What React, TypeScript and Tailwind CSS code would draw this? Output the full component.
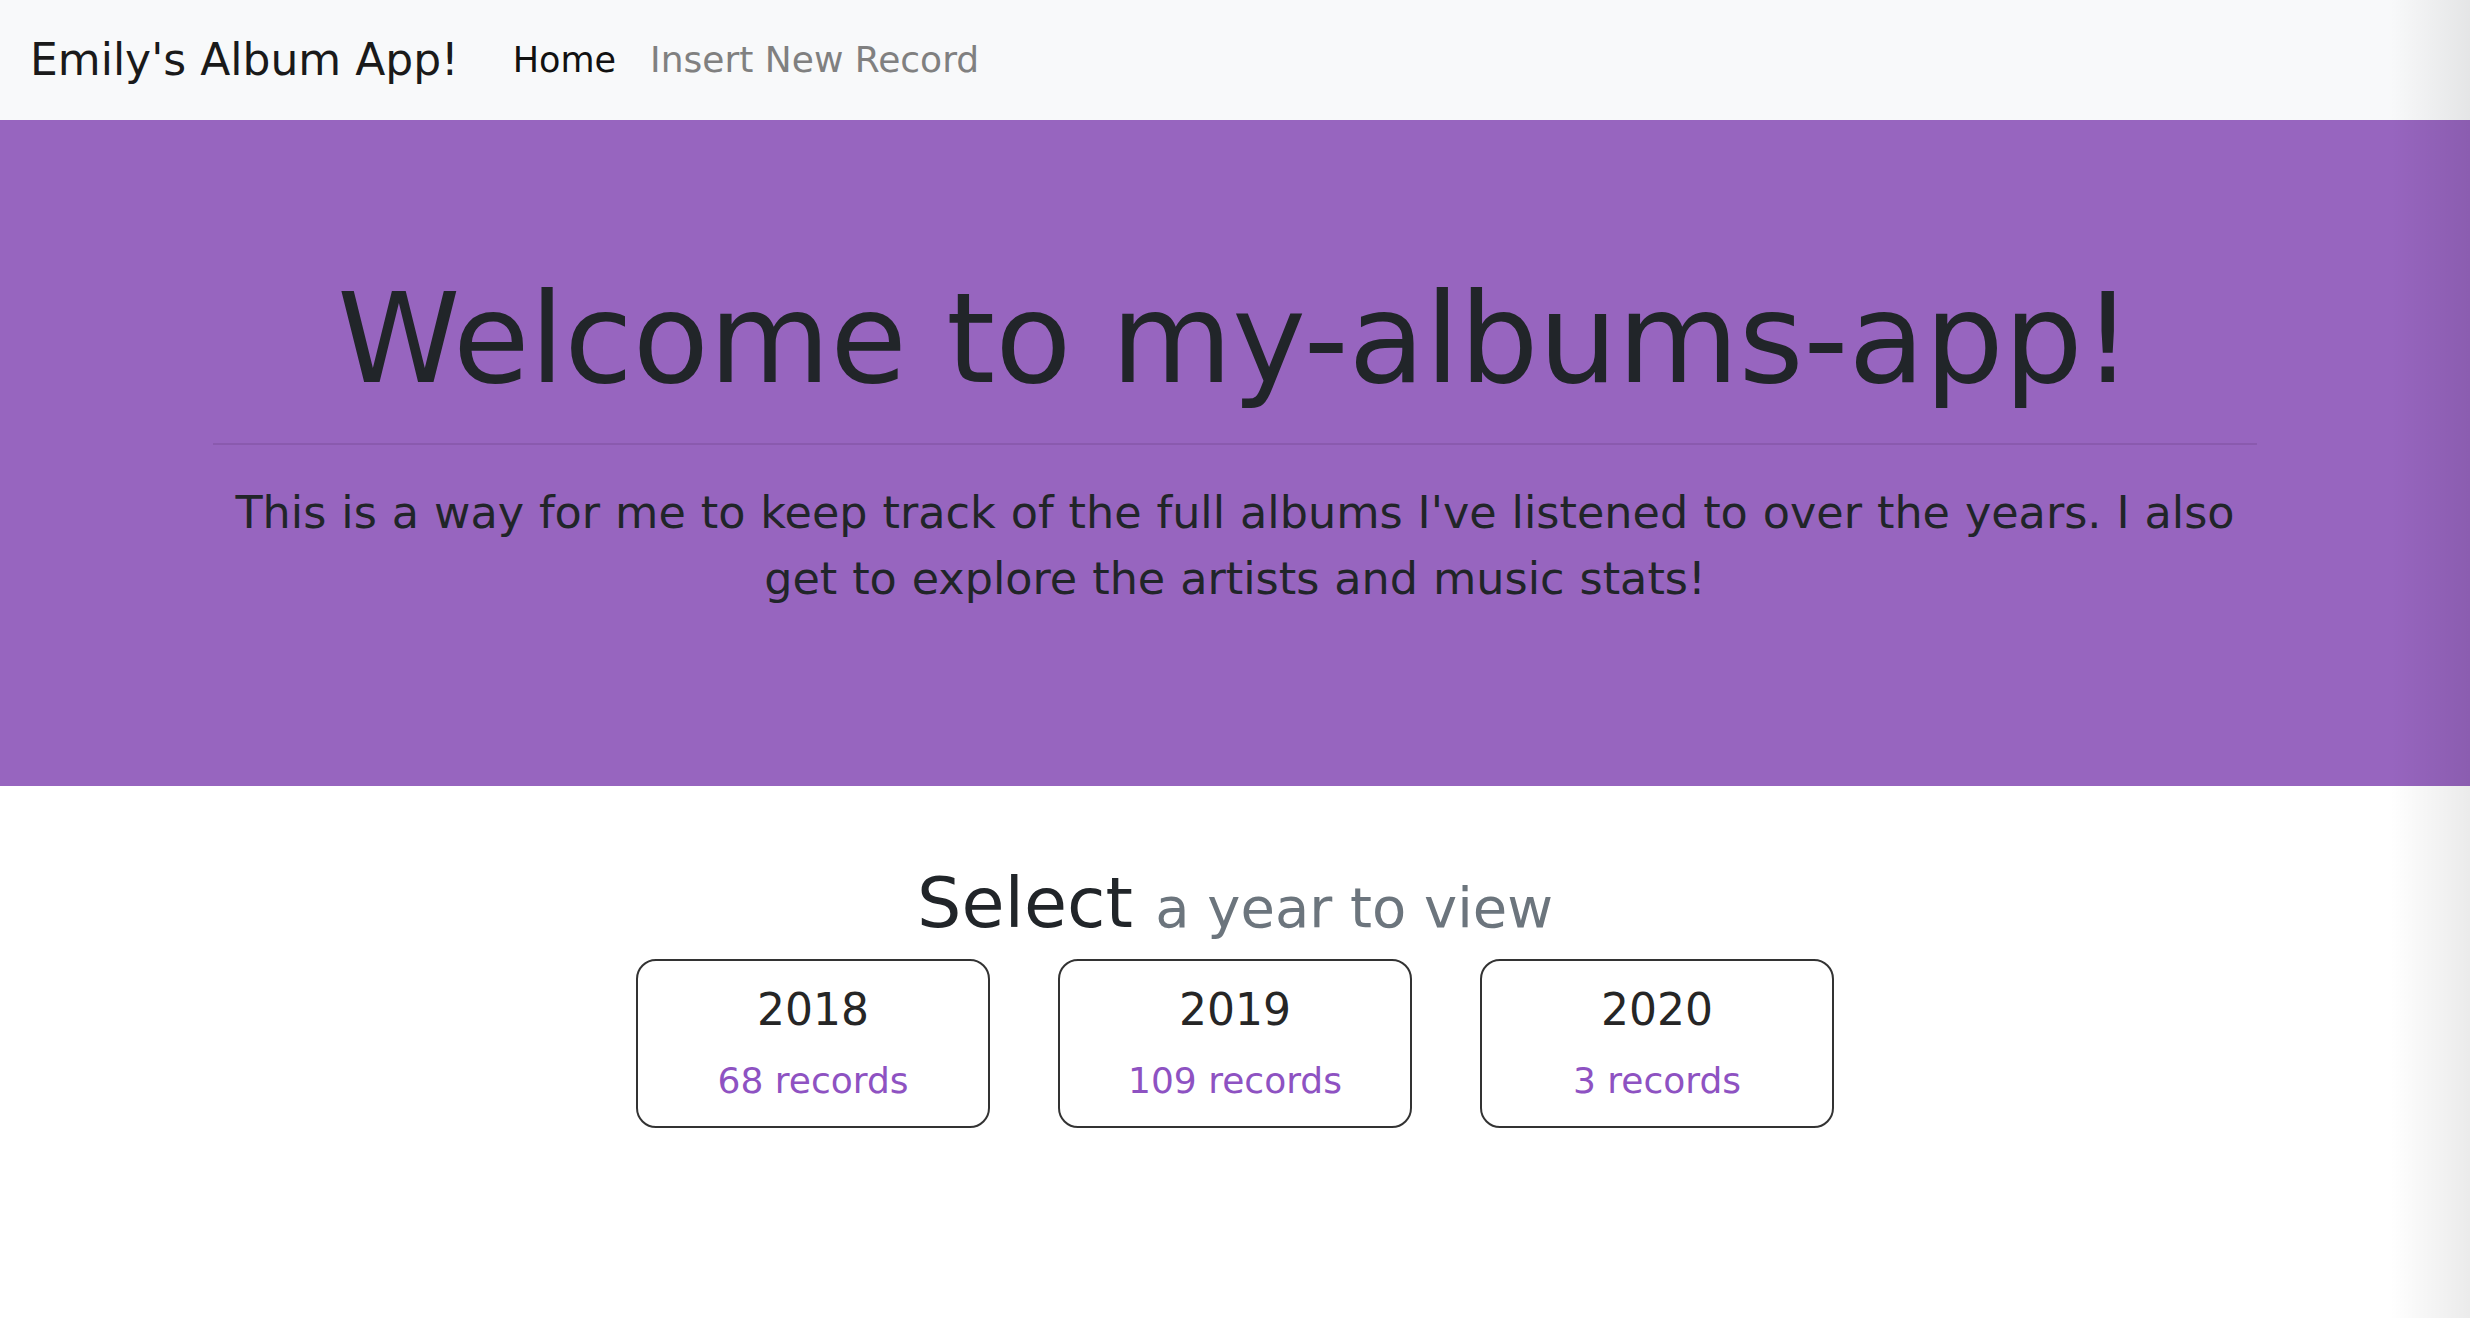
import React from "react";

type Year = {
  year: string;
  count: number;
};

const years: Year[] = [
  { year: "2018", count: 68 },
  { year: "2019", count: 109 },
  { year: "2020", count: 3 },
];

const YearCard = ({ year, count }: Year) => {
  return (
    <div className="w-[354px] h-[169px] border-2 border-[#333333] rounded-[20px] bg-white flex flex-col items-center pt-[16px]">
      <div className="text-[44px] leading-[66px] text-[#262626]">{year}</div>
      <div className="mt-[11px] text-[36px] leading-[54px] text-[#8e52c2]">
        {count} records
      </div>
    </div>
  );
};

const App = () => {
  return (
    <div
      className="relative min-h-screen bg-white overflow-hidden"
      style={{ fontFamily: '"DejaVu Sans", Verdana, sans-serif' }}
    >
      {/* Navbar */}
      <nav className="h-[120px] bg-[#f8f9fa] flex items-center px-[30px]">
        <span className="text-[44px] text-[#1a1a1a] mr-[37px]">
          Emily's Album App!
        </span>
        <a className="text-[35px] text-[#111111] px-[17px]">Home</a>
        <a className="text-[36px] text-[#808080] px-[17px]">
          Insert New Record
        </a>
      </nav>

      {/* Jumbotron */}
      <header className="bg-[#9765bf] pt-[144px] pb-[174px]">
        <div className="w-[2044px] mx-auto text-center text-[#212529]">
          <h1 className="text-[124.5px] leading-[1.2]">
            Welcome to my-albums-app!
          </h1>
          <hr className="mt-[30px] border-0 border-t-2 border-[#8a5aae]" />
          <p className="mt-[35px] px-[12px] text-[44.5px] leading-[66px] [word-spacing:0.8px]">
            This is a way for me to keep track of the full albums I've listened
            to over the years. I also get to explore the artists and music
            stats!
          </p>
        </div>
      </header>

      {/* Year selection */}
      <section className="flex flex-col items-center pt-[75px]">
        <h2 className="text-[70px] leading-[1.2] text-[#212529]">
          Select{" "}
          <small className="text-[56px] text-[#6c757d]">a year to view</small>
        </h2>
        <div className="mt-[14px] flex gap-[68px]">
          {years.map((y) => (
            <YearCard key={y.year} year={y.year} count={y.count} />
          ))}
        </div>
      </section>

      {/* right edge shading */}
      <div className="pointer-events-none absolute top-0 right-0 h-full w-[80px] bg-gradient-to-r from-transparent to-black/[0.08]" />
    </div>
  );
};

export default App;
